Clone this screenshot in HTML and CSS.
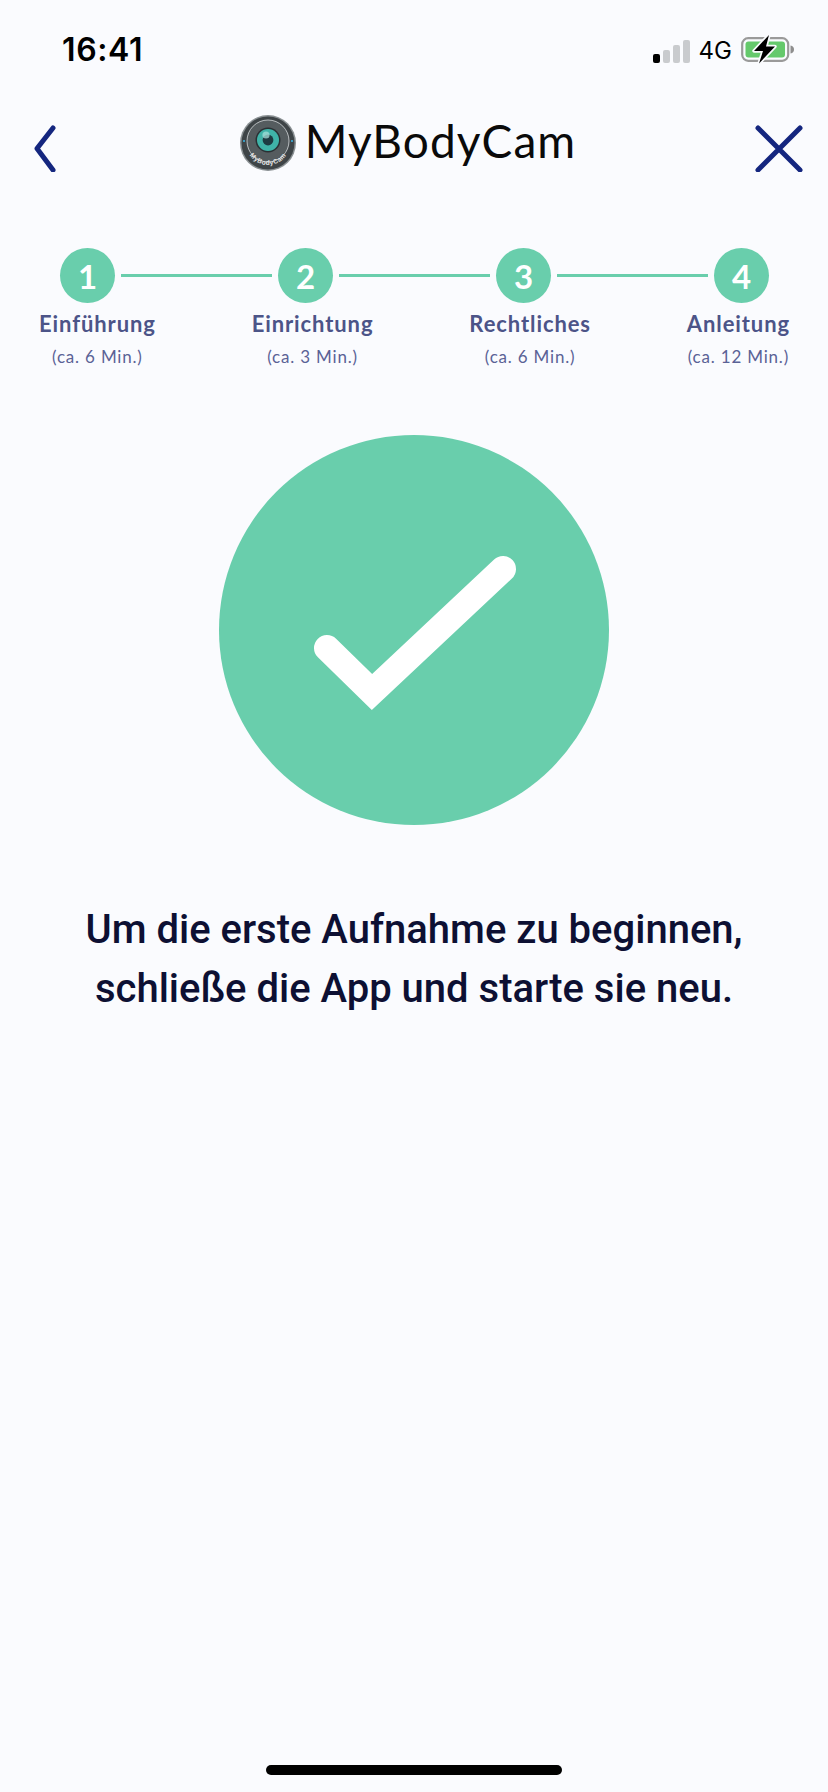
FILE: index.html
```html
<!DOCTYPE html>
<html lang="de">
  <head>
    <meta charset="UTF-8" />
    <meta name="viewport" content="width=device-width, initial-scale=1.0" />
    <title>MyBodyCam</title>
    <link rel="stylesheet" href="styles.css">
  </head>
  <body>
    <div class="screen">
      <div class="status-bar">
        <span class="time">16:41</span>
        <div class="status-right">
          <div class="signal">
            <span class="bar bar-1"></span>
            <span class="bar bar-2"></span>
            <span class="bar bar-3"></span>
            <span class="bar bar-4"></span>
          </div>
          <span class="network">4G</span>
          <svg class="battery" width="54" height="30" viewBox="0 0 54 30">
            <rect x="1.2" y="4.2" width="46" height="22.6" rx="6" fill="none" stroke="#9a9a9a" stroke-width="2.2"/>
            <rect x="4.5" y="7.5" width="39.5" height="16" rx="3" fill="#65c96c"/>
            <path d="M49.5 11.5 C52 12 53 13.5 53 15.5 C53 17.5 52 19 49.5 19.5 Z" fill="#8e8e8e"/>
            <path d="M28 1 L13 17 L22 17 L18 29.5 L34 12.5 L25 12.5 Z" fill="#000" stroke="#fafbfe" stroke-width="3.4" stroke-linejoin="round" paint-order="stroke"/>
          </svg>
        </div>
      </div>

      <div class="header">
        <svg class="nav-icon" width="24" height="48" viewBox="0 0 24 48">
          <polyline points="20,4 4,24.5 20,46" fill="none" stroke="#14267f" stroke-width="5" stroke-linecap="round" stroke-linejoin="round"/>
        </svg>
        <div class="brand">
          <svg class="logo" width="58" height="58" viewBox="0 0 58 58">
            <defs>
              <path id="logoArc" d="M7 29 A22 22 0 0 0 51 29"/>
            </defs>
            <circle cx="29" cy="29" r="28" fill="#8a9093"/>
            <circle cx="29" cy="29" r="26.5" fill="#3e4447"/>
            <circle cx="29" cy="27" r="21" fill="#555c5f" stroke="#c5cacc" stroke-width="0.9"/>
            <circle cx="29" cy="26" r="12.5" fill="#2a3034"/>
            <circle cx="29" cy="26" r="11" fill="#3fb3a8"/>
            <circle cx="29" cy="26" r="5.4" fill="#1d3b42"/>
            <circle cx="27" cy="21" r="3.6" fill="#a6ded8" opacity="0.75"/>
            <circle cx="5" cy="27" r="1" fill="#39b6e6"/>
            <circle cx="53" cy="27" r="1" fill="#39b6e6"/>
            <text class="logo-text"><textPath href="#logoArc" startOffset="50%" text-anchor="middle">MyBodyCam</textPath></text>
          </svg>
          <span class="brand-name">MyBodyCam</span>
        </div>
        <svg class="nav-icon" width="48" height="48" viewBox="0 0 48 48">
          <path d="M3 4 L45 46 M45 4 L3 46" fill="none" stroke="#14267f" stroke-width="5" stroke-linecap="round"/>
        </svg>
      </div>

      <div class="stepper">
        <span class="step-dot">1</span>
        <span class="step-line"></span>
        <span class="step-dot">2</span>
        <span class="step-line"></span>
        <span class="step-dot">3</span>
        <span class="step-line"></span>
        <span class="step-dot">4</span>
      </div>

      <div class="step-labels">
        <div class="step-label">
          <div class="step-name">Einführung</div>
          <div class="step-time">(ca. 6 Min.)</div>
        </div>
        <div class="step-label">
          <div class="step-name">Einrichtung</div>
          <div class="step-time">(ca. 3 Min.)</div>
        </div>
        <div class="step-label">
          <div class="step-name">Rechtliches</div>
          <div class="step-time">(ca. 6 Min.)</div>
        </div>
        <div class="step-label">
          <div class="step-name">Anleitung</div>
          <div class="step-time">(ca. 12 Min.)</div>
        </div>
      </div>

      <div class="success-circle">
        <svg width="390" height="390" viewBox="0 0 390 390">
          <polyline points="108,213 153,257 284,134" fill="none" stroke="#fff" stroke-width="26" stroke-linecap="round" stroke-linejoin="miter"/>
        </svg>
      </div>

      <p class="message">Um die erste Aufnahme zu beginnen,<br>schließe die App und starte sie neu.</p>

      <div class="home-indicator"></div>
    </div>
  </body>
</html>
```

FILE: styles.css
```css
* {
  margin: 0;
  padding: 0;
  box-sizing: border-box;
}

html,
body {
  height: 100%;
  overflow: hidden;
}

body {
  background: #fafbfe;
  font-family: "Lato", sans-serif;
}

.screen {
  display: flex;
  flex-direction: column;
  height: 1792px;
}

.status-bar {
  display: flex;
  justify-content: space-between;
  align-items: center;
  height: 86px;
  padding: 12px 33px 0 62px;
}

.time {
  font-family: "Inter", sans-serif;
  font-size: 32px;
  font-weight: 600;
  letter-spacing: 0.6px;
  color: #000;
}

.status-right {
  display: flex;
  align-items: center;
}

.signal {
  display: flex;
  align-items: flex-end;
  gap: 3px;
  height: 24px;
  margin-top: 3px;
}

.bar {
  width: 7px;
  border-radius: 2px;
  background: #c9cbce;
}

.bar-1 {
  height: 9px;
  background: #000;
}

.bar-2 {
  height: 13px;
}

.bar-3 {
  height: 18px;
}

.bar-4 {
  height: 23px;
}

.network {
  font-family: "Inter", sans-serif;
  font-size: 24px;
  color: #000;
  margin: 2px 9px 0 9px;
}

.battery {
  display: block;
}

.header {
  display: flex;
  justify-content: space-between;
  align-items: center;
  height: 114px;
  padding: 0 25px 0 33px;
}

.nav-icon {
  display: block;
  margin-top: 10px;
}

.brand {
  display: flex;
  align-items: center;
  gap: 8px;
  margin-left: 155px;
  margin-right: 152px;
}

.logo {
  display: block;
}

.logo-text {
  font-family: "Liberation Sans", sans-serif;
  font-size: 6.5px;
  font-weight: 700;
  letter-spacing: 0.4px;
  fill: #e8e8e8;
}

.brand-name {
  font-size: 46px;
  font-weight: 400;
  line-height: 52px;
  margin-top: -5px;
  color: #0a0a0a;
  letter-spacing: 1.1px;
}

.stepper {
  display: flex;
  align-items: center;
  gap: 6px;
  margin-top: 48px;
  padding: 0 59px 0 60px;
}

.step-dot {
  display: flex;
  justify-content: center;
  align-items: center;
  flex: none;
  width: 55px;
  height: 55px;
  border-radius: 50%;
  background: #69ceac;
  color: #fff;
  font-size: 33px;
  font-weight: 700;
}

.step-line {
  flex: 1;
  height: 3px;
  background: #69ceac;
}

.step-labels {
  display: flex;
  justify-content: space-between;
  margin-top: 6px;
  padding: 0 38px 0 39px;
}

.step-label {
  text-align: center;
  color: #4c5488;
}

.step-name {
  font-size: 22px;
  font-weight: 700;
  letter-spacing: 0.9px;
  line-height: 30px;
}

.step-time {
  font-size: 17px;
  color: #5a6296;
  letter-spacing: 0.8px;
  line-height: 24px;
  margin-top: 6px;
}

.success-circle {
  align-self: center;
  width: 390px;
  height: 390px;
  margin-top: 66px;
  border-radius: 50%;
  background: #69ceac;
}

.success-circle svg {
  display: block;
}

.message {
  margin-top: 75px;
  font-family: "Roboto", sans-serif;
  font-size: 40px;
  font-weight: 500;
  line-height: 59px;
  color: #0d1033;
  text-align: center;
}

.home-indicator {
  align-self: center;
  width: 296px;
  height: 10px;
  margin-top: auto;
  margin-bottom: 17px;
  border-radius: 5px;
  background: #000;
}
```
